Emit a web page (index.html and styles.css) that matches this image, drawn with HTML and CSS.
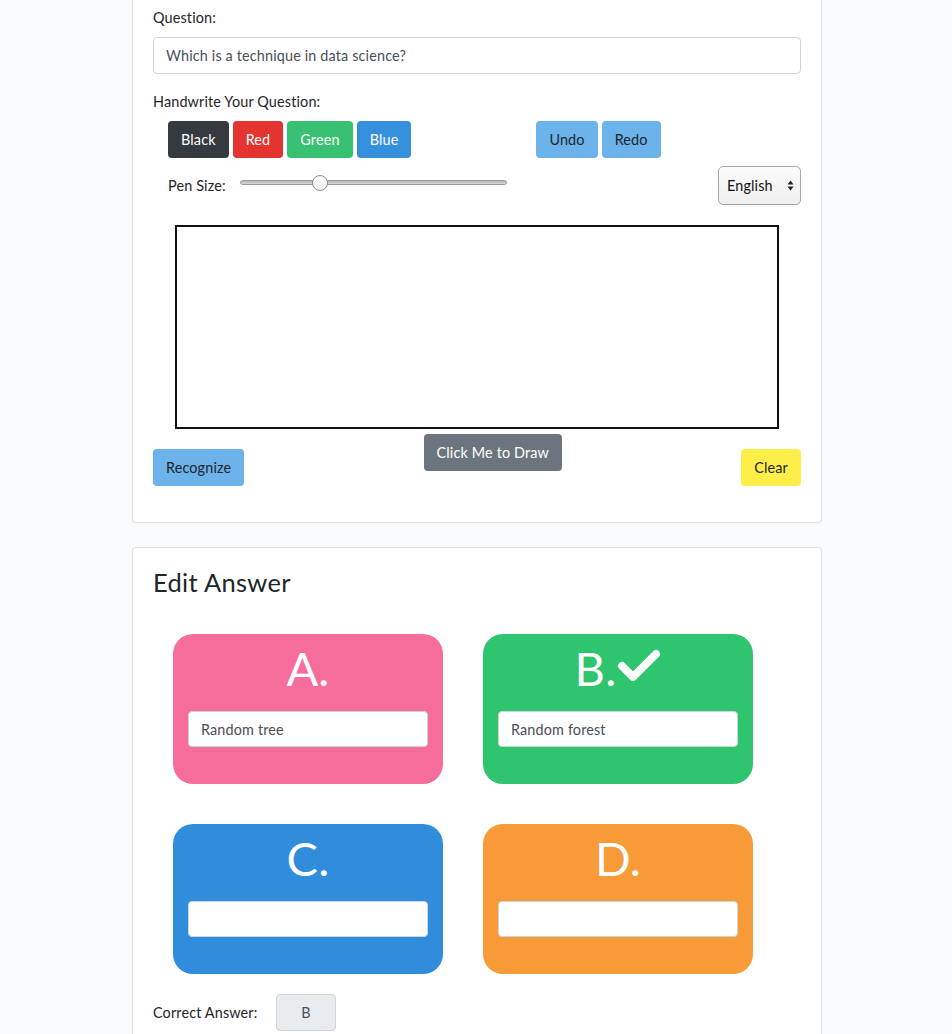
FILE: index.html
```html
<!DOCTYPE html>
<html lang="en">
<head>
<meta charset="utf-8">
<title>Edit Question</title>
<link rel="stylesheet" href="styles.css">
</head>
<body>
<div class="page">
  <div class="card card-question">
    <div class="card-body">
      <div class="form-group">
        <label class="label">Question:</label>
        <input class="form-control" type="text" value="Which is a technique in data science?">
      </div>
      <div class="form-group">
        <label class="label">Handwrite Your Question:</label>
        <div class="tools">
          <div class="btn-group">
            <button class="btn btn-dark">Black</button>
            <button class="btn btn-red">Red</button>
            <button class="btn btn-green">Green</button>
            <button class="btn btn-blue">Blue</button>
          </div>
          <div class="btn-group history">
            <button class="btn btn-info">Undo</button>
            <button class="btn btn-info">Redo</button>
          </div>
        </div>
        <div class="pen-row">
          <span class="pen-label">Pen Size:</span>
          <input class="pen-range" type="range" min="1" max="50" value="15">
          <div class="lang-select">
            <span>English</span>
            <svg class="updown" width="7" height="11" viewBox="0 0 7 11"><path d="M3.5 0.5 L6.5 4.5 L0.5 4.5 Z M3.5 10.5 L6.5 6.5 L0.5 6.5 Z" fill="#222"/></svg>
          </div>
        </div>
        <div class="canvas-wrap"><div class="canvas"></div></div>
        <div class="actions">
          <button class="btn btn-info btn-low">Recognize</button>
          <button class="btn btn-secondary">Click Me to Draw</button>
          <button class="btn btn-yellow btn-low">Clear</button>
        </div>
      </div>
    </div>
  </div>

  <div class="card card-answer">
    <div class="card-body">
      <h3 class="title">Edit Answer</h3>
      <div class="answers">
        <div class="answer answer-a">
          <div class="letter">A.</div>
          <input class="form-control answer-input" type="text" value="Random tree">
        </div>
        <div class="answer answer-b">
          <div class="letter">B.<svg class="check" width="44" height="34" viewBox="0 0 44 34"><path d="M5 17 L16 28 L39 5" fill="none" stroke="#fff" stroke-width="8" stroke-linecap="round" stroke-linejoin="round"/></svg></div>
          <input class="form-control answer-input" type="text" value="Random forest">
        </div>
        <div class="answer answer-c">
          <div class="letter">C.</div>
          <input class="form-control answer-input" type="text" value="">
        </div>
        <div class="answer answer-d">
          <div class="letter">D.</div>
          <input class="form-control answer-input" type="text" value="">
        </div>
      </div>
      <div class="correct-row">
        <span class="correct-label">Correct Answer:</span>
        <div class="correct-box">B</div>
      </div>
    </div>
  </div>
</div>
</body>
</html>
```

FILE: styles.css
```css
* { box-sizing: border-box; }

html, body {
  margin: 0;
  padding: 0;
  background: #f8fafc;
  font-family: "Lato", "Open Sans", sans-serif;
  font-size: 14.4px;
  line-height: 1.6;
  letter-spacing: 0.15px;
  color: #212529;
}

.page {
  width: 690px;
  margin: -15px 0 0 132px;
}

.card {
  background: #fff;
  border: 1px solid rgba(0, 0, 0, 0.125);
  border-radius: 4px;
}

.card-answer {
  margin-top: 24px;
}

.card-body {
  padding: 20px;
}

.form-group {
  margin-bottom: 16px;
}

.label {
  display: block;
  margin-bottom: 8px;
}

.form-control {
  display: block;
  width: 100%;
  height: 37px;
  padding: 6px 12px;
  font: inherit;
  letter-spacing: inherit;
  color: #495057;
  background: #fff;
  border: 1px solid #ced4da;
  border-radius: 4px;
  outline: none;
}

.tools {
  display: flex;
  padding-left: 15px;
}

.btn-group {
  display: flex;
  gap: 4px;
}

.history {
  margin-left: 125px;
}

.btn {
  font: inherit;
  letter-spacing: inherit;
  height: 37px;
  padding: 6px 12px;
  border: 1px solid transparent;
  border-radius: 4px;
  color: #fff;
  cursor: pointer;
  white-space: nowrap;
}

.btn-dark { background: #343a40; }
.btn-red { background: #e3342f; }
.btn-green { background: #38c172; }
.btn-blue { background: #3490dc; }
.btn-info { background: #6cb2eb; color: #212529; }
.btn-yellow { background: #ffed4a; color: #212529; }
.btn-secondary { background: #6c757d; }

.pen-row {
  display: flex;
  align-items: center;
  padding-left: 15px;
  margin-top: 8px;
  height: 39px;
}

.pen-label {
  width: 72px;
  margin-top: 0;
}

.pen-range {
  -webkit-appearance: none;
  appearance: none;
  width: 267px;
  height: 16px;
  margin: 0 0 6px 0;
  background: transparent;
}

.pen-range::-webkit-slider-runnable-track {
  height: 5px;
  background: linear-gradient(#b8b8b8, #d6d6d6);
  border: 1px solid #9a9a9a;
  border-radius: 3px;
}

.pen-range::-webkit-slider-thumb {
  -webkit-appearance: none;
  width: 16px;
  height: 16px;
  margin-top: -6.5px;
  border-radius: 50%;
  background: linear-gradient(#ffffff, #f0f0f0);
  border: 1px solid #8e8e8e;
}

.lang-select {
  margin-left: auto;
  width: 83px;
  height: 39px;
  display: flex;
  align-items: center;
  justify-content: space-between;
  padding: 0 6px 0 8px;
  border: 1px solid #a8a8a8;
  border-radius: 5px;
  background: linear-gradient(#fbfbfb, #efefef);
  color: #111;
}

.canvas-wrap {
  display: flex;
  justify-content: center;
  margin-top: 20px;
}

.canvas {
  width: 604px;
  height: 204px;
  border: 2px solid #111;
  background: #fff;
}

.actions {
  display: flex;
  justify-content: space-between;
  align-items: flex-start;
  margin-top: 5px;
}

.btn-low {
  margin-top: 15px;
}

.title {
  margin: 0 0 17px 0;
  font-size: 25.5px;
  font-weight: 400;
  line-height: 1.15;
  letter-spacing: 0.3px;
}

.answers {
  display: flex;
  flex-wrap: wrap;
  width: 620px;
}

.answer {
  width: 270px;
  height: 150px;
  margin: 20px;
  border-radius: 20px;
  padding: 5px 15px;
}

.answer-a { background: #f66d9b; }
.answer-b { background: #2fc56f; }
.answer-c { background: #2f8ddc; }
.answer-d { background: #f79a37; }

.letter {
  display: flex;
  align-items: center;
  justify-content: center;
  height: 57px;
  margin-bottom: 15px;
  color: #fff;
  font-size: 47px;
  line-height: 1.2;
}

.check {
  margin-left: 1px;
  margin-top: -4px;
}

.answer-input {
  height: 36px;
  color: #495057;
}

.correct-row {
  display: flex;
  align-items: center;
  margin-top: 0;
}

.correct-label {
  width: 123px;
}

.correct-box {
  width: 60px;
  height: 37px;
  display: flex;
  align-items: center;
  justify-content: center;
  background: #e9ecef;
  border: 1px solid #ced4da;
  border-radius: 4px;
  color: #495057;
}
```
